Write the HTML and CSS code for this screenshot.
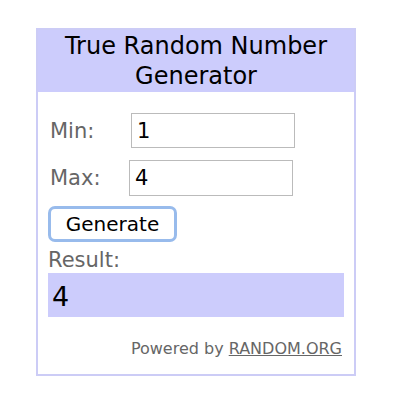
FILE: index.html
```html
<!DOCTYPE html>
<html>
<head>
<meta charset="utf-8">
<link rel="stylesheet" href="styles.css">
</head>
<body>
<div class="widget">
  <div class="header">True Random Number Generator</div>
  <div class="body">
    <div class="row row-min">
      <span class="label">Min:</span>
      <input class="field" type="text" value="1">
    </div>
    <div class="row row-max">
      <span class="label">Max:</span>
      <input class="field" type="text" value="4">
    </div>
    <button class="btn">Generate</button>
    <div class="label result-label">Result:</div>
    <div class="result">4</div>
    <div class="powered">Powered by <a href="#">RANDOM.ORG</a></div>
  </div>
</div>
</body>
</html>
```

FILE: styles.css
```css
html, body {
  margin: 0;
  padding: 0;
  background: #fff;
}
body {
  font-family: "DejaVu Sans", Verdana, sans-serif;
}
.widget {
  box-sizing: border-box;
  width: 320px;
  margin: 28px 0 0 36px;
  border: 2px solid #ccccf6;
}
.header {
  background: #ccccfc;
  color: #000;
  font-size: 24px;
  line-height: 30px;
  text-align: center;
  padding: 1px 20px 1px;
}
.body {
  padding: 21px 10px 16px 10px;
}
.row {
  display: flex;
  align-items: center;
  margin-bottom: 12px;
}
.label {
  color: #666;
  font-size: 21px;
}
.row .label {
  padding-left: 2px;
}
.row-min .label { width: 81px; }
.row-max .label { width: 79px; }
.field {
  box-sizing: border-box;
  width: 164px;
  height: 35px;
  border: 1px solid #bbb;
  padding: 0 5px;
  font-family: "DejaVu Sans", Verdana, sans-serif;
  font-size: 21px;
  color: #000;
  background: #fff;
  outline: none;
}
.row-max .field { height: 36px; }
.btn {
  box-sizing: border-box;
  display: block;
  width: 129px;
  height: 36px;
  margin-top: -2px;
  border: 3px solid #98bbec;
  border-radius: 7px;
  background: #fff;
  font-family: "DejaVu Sans", Verdana, sans-serif;
  font-size: 20px;
  color: #000;
  padding: 0;
}
.result-label {
  margin-top: 5px;
  line-height: 26px;
}
.result {
  margin-top: 0;
  background: #ccccfc;
  height: 44px;
  line-height: 48px;
  font-size: 27px;
  padding-left: 4px;
  color: #000;
}
.powered {
  margin-top: 22px;
  text-align: right;
  font-size: 16px;
  color: #666;
  padding-right: 2px;
}
.powered a {
  color: #666;
  text-decoration: underline;
}
```
